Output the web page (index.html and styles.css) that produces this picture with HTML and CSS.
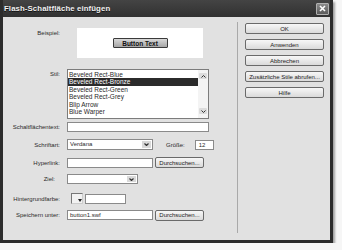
FILE: index.html
```html
<!DOCTYPE html>
<html lang="de">
  <head>
    <meta charset="UTF-8" />
    <title>Flash-Schaltfläche einfügen</title>
    <link rel="stylesheet" href="styles.css">
  </head>
  <body>
    <div class="window">
      <div class="titlebar">
        <span class="titlebar__title">Flash-Schaltfläche einfügen</span>
        <span class="titlebar__close">
          <svg width="7" height="7" viewBox="0 0 7 7"><path d="M1 1L6 6M6 1L1 6" stroke="#fff" stroke-width="1.6"/></svg>
        </span>
      </div>
      <div class="dialog">
        <div class="form">
          <div class="row row--example">
            <span class="label label--top">Beispiel:</span>
            <div class="preview"><span class="preview__btn">Button Text</span></div>
          </div>
          <div class="row row--style">
            <span class="label label--top">Stil:</span>
            <div class="list">
              <ul class="list__items">
                <li class="list__item">Beveled Rect-Blue</li>
                <li class="list__item list__item--selected">Beveled Rect-Bronze</li>
                <li class="list__item">Beveled Rect-Green</li>
                <li class="list__item">Beveled Rect-Grey</li>
                <li class="list__item">Blip Arrow</li>
                <li class="list__item">Blue Warper</li>
              </ul>
              <div class="list__scroll">
                <span class="list__arrow">
                  <svg width="5" height="3" viewBox="0 0 5 3"><path d="M0.5 2.5L2.5 0.5L4.5 2.5" fill="none" stroke="#333" stroke-width="1"/></svg>
                </span>
                <span class="list__arrow">
                  <svg width="5" height="3" viewBox="0 0 5 3"><path d="M0.5 0.5L2.5 2.5L4.5 0.5" fill="none" stroke="#333" stroke-width="1"/></svg>
                </span>
              </div>
            </div>
          </div>
          <div class="row row--text">
            <span class="label">Schaltflächentext:</span>
            <span class="input input--wide"></span>
          </div>
          <div class="row row--font">
            <span class="label">Schriftart:</span>
            <span class="select select--font">
              <span class="select__value">Verdana</span>
              <span class="select__arrow">
                <svg width="5" height="3" viewBox="0 0 5 3"><path d="M0.5 0.5L2.5 2.5L4.5 0.5" fill="none" stroke="#333" stroke-width="1.2"/></svg>
              </span>
            </span>
            <span class="inline-label">Größe:</span>
            <span class="input input--size">12</span>
          </div>
          <div class="row row--link">
            <span class="label">Hyperlink:</span>
            <span class="input input--mid"></span>
            <span class="btn btn--browse">Durchsuchen...</span>
          </div>
          <div class="row row--target">
            <span class="label label--ziel">Ziel:</span>
            <span class="select select--target">
              <span class="select__value"></span>
              <span class="select__arrow">
                <svg width="5" height="3" viewBox="0 0 5 3"><path d="M0.5 0.5L2.5 2.5L4.5 0.5" fill="none" stroke="#333" stroke-width="1.2"/></svg>
              </span>
            </span>
          </div>
          <div class="row row--bg">
            <span class="label">Hintergrundfarbe:</span>
            <span class="swatch">
              <svg class="swatch__tri" width="4" height="3" viewBox="0 0 4 3"><path d="M0 0H4L2 3Z" fill="#222"/></svg>
            </span>
            <span class="input input--color"></span>
          </div>
          <div class="row row--save">
            <span class="label">Speichern unter:</span>
            <span class="input input--mid">button1.swf</span>
            <span class="btn btn--browse">Durchsuchen...</span>
          </div>
        </div>
        <div class="divider"></div>
        <div class="actions">
          <span class="btn btn--action">OK</span>
          <span class="btn btn--action">Anwenden</span>
          <span class="btn btn--action">Abbrechen</span>
          <span class="btn btn--action">Zusätzliche Stile abrufen...</span>
          <span class="btn btn--action">Hilfe</span>
        </div>
      </div>
    </div>
  </body>
</html>
```

FILE: styles.css
```css
*,
*::before,
*::after {
  padding: 0;
  margin: 0;
  box-sizing: border-box;
}

body {
  background-color: #f6f6f6;
  font-family: "Liberation Sans", Arial, sans-serif;
  font-size: 6px;
  color: #2a2a2a;
}

.window {
  width: 333px;
  height: 243px;
  border: 3px solid #2c2c2c;
  border-top: 0;
  background-color: #e1e1e1;
  box-shadow: 2px 2px 2px rgba(0, 0, 0, 0.35);
  display: flex;
  flex-direction: column;
}

/* title bar */
.titlebar {
  height: 17px;
  background: linear-gradient(#444444, #313131);
  display: flex;
  align-items: center;
  justify-content: space-between;
  padding: 0 1px 0 1px;
}

.titlebar__title {
  color: #f2f2f2;
  font-size: 7.8px;
  font-weight: 700;
  letter-spacing: 0.1px;
  text-shadow: 0 1px 0 #111;
}

.titlebar__close {
  width: 13px;
  height: 12px;
  background: linear-gradient(#8a8a8a, #5a5a5a);
  border: 1px solid #b0b0b0;
  border-radius: 1px;
  display: flex;
  align-items: center;
  justify-content: center;
}

/* body */
.dialog {
  flex: 1;
  display: flex;
}

.form {
  width: 234px;
  display: flex;
  flex-direction: column;
}

.row {
  display: flex;
  align-items: center;
}

.label {
  width: 57px;
  margin-right: 7px;
  text-align: right;
  white-space: nowrap;
  flex-shrink: 0;
}

.label--top {
  align-self: flex-start;
  padding-top: 2px;
}

.label--ziel {
  padding-right: 5px;
}

.row--example {
  margin-top: 11px;
  height: 30px;
}

.preview {
  margin-left: 10px;
  width: 126px;
  height: 30px;
  background-color: #fff;
  display: flex;
  align-items: center;
  justify-content: center;
}

.preview__btn {
  width: 55px;
  height: 10px;
  background: linear-gradient(#d8d8d8, #a6a6a6);
  border: 1px solid #3a3a3a;
  border-radius: 1px;
  font-size: 6.5px;
  font-weight: 700;
  color: #111;
  display: flex;
  align-items: center;
  justify-content: center;
}

.row--style {
  margin-top: 11px;
  height: 50px;
  align-items: stretch;
}

.list {
  width: 142px;
  border: 1px solid #7c7c7c;
  background-color: #fff;
  display: flex;
}

.list__items {
  flex: 1;
  list-style: none;
  padding-top: 1px;
}

.list__item {
  height: 7.4px;
  line-height: 7.4px;
  padding-left: 1px;
  font-size: 6.5px;
  white-space: nowrap;
}

.list__item--selected {
  background-color: #2b2b2b;
  color: #fff;
}

.list__scroll {
  width: 10px;
  display: flex;
  flex-direction: column;
  justify-content: space-between;
  padding: 3px 1px 4px;
  background-color: #f4f4f4;
}

.list__arrow {
  height: 6px;
  background-color: #dcdcdc;
  border-radius: 1px;
  display: flex;
  align-items: center;
  justify-content: center;
}

.input {
  height: 10px;
  border: 1px solid #8a8a8a;
  background-color: #fff;
  padding-left: 2px;
  line-height: 8px;
  white-space: nowrap;
}

.input--wide {
  width: 142px;
}

.input--mid {
  width: 86px;
}

.input--size {
  width: 19px;
  padding-left: 3px;
}

.input--color {
  width: 41px;
  margin-left: 2px;
}

.row--text {
  margin-top: 3px;
  height: 10px;
}

.row--font {
  margin-top: 7px;
  height: 11px;
}

.select {
  height: 11px;
  border: 1px solid #8a8a8a;
  background-color: #fff;
  display: flex;
  align-items: stretch;
}

.select--font {
  width: 86px;
}

.select--target {
  width: 71px;
  height: 10px;
}

.select__value {
  flex: 1;
  padding-left: 2px;
  line-height: 9px;
}

.select__arrow {
  width: 9px;
  margin: 1px;
  background-color: #d9d9d9;
  display: flex;
  align-items: center;
  justify-content: center;
}

.inline-label {
  margin-left: 13px;
  margin-right: 10px;
}

.row--link {
  margin-top: 7px;
  height: 11px;
}

.btn {
  height: 11px;
  border: 1px solid #6a6a6a;
  border-radius: 2px;
  background: linear-gradient(#f7f7f7, #dadada);
  color: #222;
  display: flex;
  align-items: center;
  justify-content: center;
  white-space: nowrap;
}

.btn--browse {
  width: 49px;
  margin-left: 2px;
}

.row--target {
  margin-top: 6px;
  height: 10px;
}

.row--bg {
  margin-top: 9px;
  height: 11px;
}

.swatch {
  width: 12px;
  height: 11px;
  margin-left: 4px;
  border: 1px solid #777;
  border-right-color: #ccc;
  border-bottom-color: #ccc;
  background-color: #f2f2f2;
  display: flex;
  align-items: flex-end;
  justify-content: flex-end;
}

.swatch__tri {
  margin: 0 0 1px;
}

.row--save {
  margin-top: 6px;
  height: 10px;
}

/* right column */
.divider {
  width: 1px;
  margin: 5px 0 7px;
  background-color: #a9a9a9;
}

.actions {
  padding: 6px 0 0 7px;
  display: flex;
  flex-direction: column;
  gap: 5px;
}

.btn--action {
  width: 79px;
}
```
